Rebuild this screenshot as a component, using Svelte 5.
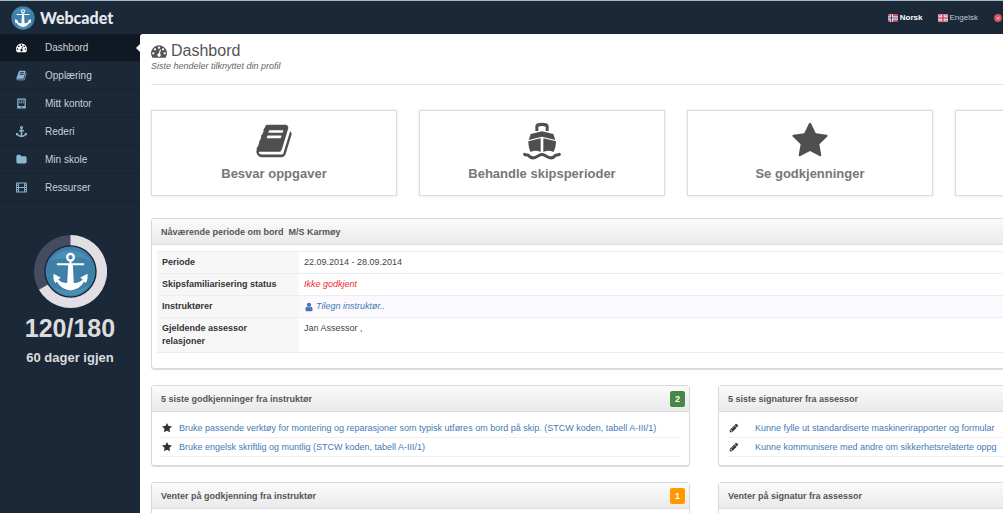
<script lang="ts">
  const icons: Record<string, string> = {
    dashboard: 'M384 1152q0-53-37.5-90.5t-90.5-37.5-90.5 37.5-37.5 90.5 37.5 90.5 90.5 37.5 90.5-37.5 37.5-90.5zm192-448q0-53-37.5-90.5t-90.5-37.5-90.5 37.5-37.5 90.5 37.5 90.5 90.5 37.5 90.5-37.5 37.5-90.5zm428 481l101-382q6-26-7.5-48.5t-38.5-29.5-48 6.5-30 39.5l-101 382q-60 5-107 43.5t-63 98.5q-20 77 20 146t117 89 146-20 89-117q16-60-6-117t-72-91zm660-33q0-53-37.5-90.5t-90.5-37.5-90.5 37.5-37.5 90.5 37.5 90.5 90.5 37.5 90.5-37.5 37.5-90.5zm-640-640q0-53-37.5-90.5t-90.5-37.5-90.5 37.5-37.5 90.5 37.5 90.5 90.5 37.5 90.5-37.5 37.5-90.5zm448 192q0-53-37.5-90.5t-90.5-37.5-90.5 37.5-37.5 90.5 37.5 90.5 90.5 37.5 90.5-37.5 37.5-90.5zm320 448q0 261-141 483-19 29-54 29h-1402q-35 0-54-29-141-221-141-483 0-182 71-348t191-286 286-191 348-71 348 71 286 191 191 286 71 348z',
    book: 'M1703 478q40 57 18 129l-275 906q-19 64-76.5 107.5t-122.5 43.5h-923q-77 0-148.5-53.5t-99.5-131.5q-24-67-2-127 0-4 3-27t4-37q1-8-3-21.5t-3-19.5q2-11 8-21t16.5-23.5 16.5-23.5q23-38 45-91.5t30-91.5q3-10 .5-30t-.5-28q3-11 17-28t17-23q21-36 42-92t25-90q1-9-2.5-32t.5-28q4-13 22-30.5t22-22.5q19-26 42.5-84.5t27.5-96.5q1-8-3-25.5t-2-26.5q2-8 9-18t18-23 17-21q8-12 16.5-30.5t15-35 16-36 19.5-32 26.5-23.5 36-11.5 47.5 5.5l-1 3q38-9 51-9h761q74 0 114 56t18 130l-274 906q-36 119-71.5 153.5t-128.5 34.5h-869q-27 0-38 15-11 16-1 43 24 70 144 70h923q29 0 56-15.5t35-41.5l300-987q7-22 5-57 38 15 59 43zm-1064 2q-4 13 2 22.5t20 9.5h608q13 0 25.5-9.5t16.5-22.5l21-64q4-13-2-22.5t-20-9.5h-608q-13 0-25.5 9.5t-16.5 22.5zm-83 256q-4 13 2 22.5t20 9.5h608q13 0 25.5-9.5t16.5-22.5l21-64q4-13-2-22.5t-20-9.5h-608q-13 0-25.5 9.5t-16.5 22.5z',
    office: 'M200 160q0-64 64-64h1264q64 0 64 64v1536h-1392zM400 300v1000h992v-1000zM500 400h200v160h-200zm300 0h200v160h-200zm300 0h200v160h-200zM500 700h200v160h-200zm300 0h200v160h-200zm300 0h200v160h-200zM700 1420v140h392v-140z',
    anchor: 'M960 256q0-26-19-45t-45-19-45 19-19 45 19 45 45 19 45-19 19-45zm832 928v352q0 22-20 30-8 2-12 2-12 0-23-9l-93-93q-119 143-318.5 226.5t-429.5 83.5-429.5-83.5-318.5-226.5l-93 93q-9 9-23 9-4 0-12-2-20-8-20-30v-352q0-14 9-23t23-9h352q22 0 30 20 8 19-7 35l-100 100q67 91 189.5 153.5t271.5 82.5v-647h-192q-26 0-45-19t-19-45v-128q0-26 19-45t45-19h192v-163q-58-34-93-92.5t-35-128.5q0-106 75-181t181-75 181 75 75 181q0 70-35 128.5t-93 92.5v163h192q26 0 45 19t19 45v128q0 26-19 45t-45 19h-192v647q149-20 271.5-82.5t189.5-153.5l-100-100q-15-16-7-35 8-20 30-20h352q14 0 23 9t9 23z',
    folder: 'M1728 608v704q0 92-66 158t-158 66h-1216q-92 0-158-66t-66-158v-960q0-92 66-158t158-66h320q92 0 158 66t66 158v32h672q92 0 158 66t66 158z',
    film: 'M0 224q0-128 128-128h1536q128 0 128 128v1344q0 128-128 128h-1536q-128 0-128-128zM140 240v200h190v-200zm0 370v200h190v-200zm0 370v200h190v-200zm0 370v200h190v-200zM1462 240v200h190v-200zm0 370v200h190v-200zm0 370v200h190v-200zm0 370v200h190v-200zM480 240v570h832v-570zm0 740v570h832v-570z',
    star: 'M1728 647q0 22-26 48l-363 354 86 500q1 7 1 20 0 21-10.5 35.5t-30.5 14.5q-19 0-40-12l-449-236-449 236q-22 12-40 12-21 0-31.5-14.5t-10.5-35.5q0-6 2-20l86-500-364-354q-25-27-25-48 0-37 56-46l502-73 225-455q19-41 49-41t49 41l225 455 502 73q56 9 56 46z',
    user: 'M1536 1399q0 109-62.5 187t-150.5 78h-854q-88 0-150.5-78t-62.5-187q0-85 8.5-160.5t31.5-152 58.5-131 94-89 134.5-34.5q131 128 313 128t313-128q76 0 134.5 34.5t94 89 58.5 131 31.5 152 8.5 160.5zm-256-887q0 159-112.5 271.5t-271.5 112.5-271.5-112.5-112.5-271.5 112.5-271.5 271.5-112.5 271.5 112.5 112.5 271.5z',
    pencil: 'M491 1536l91-91-235-235-91 91v107h128v128h107zm523-928q0-22-22-22-10 0-17 7l-542 542q-7 7-7 17 0 22 22 22 10 0 17-7l542-542q7-7 7-17zm-54-192l416 416-832 832h-416v-416zm683 96q0 53-37 90l-166 166-416-416 166-165q36-38 90-38 53 0 91 38l235 234q37 39 37 91z',
  };

  const menu = [
    { label: 'Dashbord', icon: 'dashboard', active: true },
    { label: 'Opplæring', icon: 'book' },
    { label: 'Mitt kontor', icon: 'office' },
    { label: 'Rederi', icon: 'anchor' },
    { label: 'Min skole', icon: 'folder' },
    { label: 'Ressurser', icon: 'film' },
  ];

  const tiles = [
    { label: 'Besvar oppgaver', icon: 'book' },
    { label: 'Behandle skipsperioder', icon: 'ship' },
    { label: 'Se godkjenninger', icon: 'star' },
  ];

  const panels = [
    {
      title: '5 siste godkjenninger fra instruktør',
      count: 2,
      tone: 'green',
      icon: 'star',
      items: [
        'Bruke passende verktøy for montering og reparasjoner som typisk utføres om bord på skip. (STCW koden, tabell A-III/1)',
        'Bruke engelsk skriftlig og muntlig (STCW koden, tabell A-III/1)',
      ],
    },
    {
      title: '5 siste signaturer fra assessor',
      icon: 'pencil',
      items: [
        'Kunne fylle ut standardiserte maskinerirapporter og formular',
        'Kunne kommunisere med andre om sikkerhetsrelaterte oppg',
      ],
    },
    { title: 'Venter på godkjenning fra instruktør', count: 1, tone: 'orange', icon: 'star', items: [] },
    { title: 'Venter på signatur fra assessor', icon: 'pencil', items: [] },
  ];
</script>

{#snippet icon(name: string)}
  <svg class="icon" viewBox="0 0 1792 1792" aria-hidden="true">
    <path fill-rule="evenodd" d={icons[name]} />
  </svg>
{/snippet}

{#snippet emblem()}
  <circle cx="210" cy="185" r="75" fill="#3f80a8" />
  <path d="M150 150q25-30 60-28t62 30q-30-14-60-10t-62 8zM160 232q30 14 55 12t50-20q-18 32-54 33t-51-25z" fill="#5c9cc0" opacity=".5" />
  <circle cx="210" cy="142" r="10" fill="none" stroke="#fff" stroke-width="7" />
  <path d="M207 150h6v10h38v6h-34l3 54q20-2 27-12l-8-4 22-12q2 20-5 28l-5-4q-14 24-41 26-27-2-41-26l-5 4q-7-8-5-28l22 12-8 4q7 10 27 12l3-54h-34v-6h38z" fill="#fff" />
{/snippet}

<div class="page">
  <header>
    <a class="brand" href="#home">
      <svg class="brand-mark" viewBox="133 108 154 154" aria-hidden="true">{@render emblem()}</svg>
      <span>Webcadet</span>
    </a>
    <nav class="languages">
      <a class="current" href="#no">
        <svg viewBox="0 0 18 14" aria-hidden="true">
          <rect width="18" height="14" fill="#e04a5e" />
          <path d="M6 0v14M0 7h18" stroke="#fff" stroke-width="5" />
          <path d="M6 0v14M0 7h18" stroke="#35477e" stroke-width="2" />
        </svg>
        Norsk
      </a>
      <a href="#en">
        <svg viewBox="0 0 18 14" aria-hidden="true">
          <rect width="18" height="14" fill="#5a68a0" />
          <path d="M0 0l18 14M18 0L0 14" stroke="#fff" stroke-width="4" />
          <path d="M0 0l18 14M18 0L0 14" stroke="#d84a5e" stroke-width="2" />
          <path d="M9 0v14M0 7h18" stroke="#fff" stroke-width="5" />
          <path d="M9 0v14M0 7h18" stroke="#d84a5e" stroke-width="3" />
        </svg>
        Engelsk
      </a>
      <a href="#more">
        <svg viewBox="0 0 18 14" aria-hidden="true">
          <circle cx="9" cy="7" r="7" fill="#d9505a" />
          <path d="M5 4l4 2 4-3-2 4 2 3-4-1-3 2 1-4z" fill="#f0a5a8" />
        </svg>
      </a>
    </nav>
  </header>

  <div class="body">
    <aside>
      <ul class="menu">
        {#each menu as item}
          <li class:active={item.active}>
            <a href="#menu">{@render icon(item.icon)}{item.label}</a>
          </li>
        {/each}
      </ul>
      <div class="progress">
        <svg viewBox="100 75 220 220" aria-hidden="true">
          <circle cx="210" cy="185" r="110" fill="#454c60" />
          <path d="M210 185V75A110 110 0 1 1 115 240z" fill="#e1dfe4" />
          <circle cx="210" cy="185" r="79" fill="#162638" />
          {@render emblem()}
        </svg>
        <strong>120/180</strong>
        <span>60 dager igjen</span>
      </div>
    </aside>

    <main>
      <div class="heading">
        <h1>{@render icon('dashboard')}Dashbord</h1>
        <p>Siste hendeler tilknyttet din profil</p>
      </div>

      <div class="tiles">
        {#each tiles as tile}
          <a class="tile" href="#tile">
            {#if tile.icon === 'ship'}
              <svg class="icon" viewBox="338 68 114 114" aria-hidden="true">
                <path d="M375 95V80q0-10 20-10t20 10v15h-9V82q-11-4-22 0v13zM361 104l34-8 34 8 6 18-40-10-40 10zM354 126l37-9v41q-16-8-30 0-7-12-7-32zM399 117l38 9q0 20-8 32-14-8-30 0z" />
                <path d="M343 165q6 3 10 2 9 11 20 8 8-3 14-7 8-5 16 0 6 4 14 7 11 3 20-8 4 1 10-2" fill="none" stroke="currentColor" stroke-width="9" stroke-linecap="round" stroke-linejoin="round" />
              </svg>
            {:else}
              {@render icon(tile.icon)}
            {/if}
            {tile.label}
          </a>
        {/each}
        <div class="tile"></div>
      </div>

      <section class="panel period">
        <h2>Nåværende periode om bord&nbsp; M/S Karmøy</h2>
        <table>
          <tbody>
            <tr><th scope="row">Periode</th><td>22.09.2014 - 28.09.2014</td></tr>
            <tr><th scope="row">Skipsfamiliarisering status</th><td><em>Ikke godkjent</em></td></tr>
            <tr class="highlight">
              <th scope="row">Instruktører</th>
              <td><a href="#assign">{@render icon('user')}<i>Tilegn instruktør..</i></a></td>
            </tr>
            <tr><th scope="row">Gjeldende assessor relasjoner</th><td>Jan Assessor ,</td></tr>
          </tbody>
        </table>
      </section>

      <div class="panels">
        {#each panels as panel}
          <section class="panel">
            <h2>
              {panel.title}
              {#if panel.count}<span class="badge {panel.tone}">{panel.count}</span>{/if}
            </h2>
            <ul class="list {panel.icon}">
              {#each panel.items as item}
                <li>{@render icon(panel.icon)}<a href="#item">{item}</a></li>
              {/each}
            </ul>
          </section>
        {/each}
      </div>
    </main>
  </div>
</div>

<style>
  :global(body) {
    background: #1a2838;
  }

  .page {
    height: 100vh;
    display: flex;
    flex-direction: column;
    overflow: hidden;
    font-family: 'Liberation Sans', Arial, sans-serif;
    font-size: 9px;
    color: #444;
  }

  a {
    color: #4679b4;
    text-decoration: none;
  }

  ul {
    list-style: none;
    margin: 0;
    padding: 0;
  }

  .icon {
    width: 1em;
    height: 1em;
    flex: none;
    fill: currentColor;
  }

  header {
    display: flex;
    align-items: center;
    justify-content: space-between;
    flex: none;
    height: 33px;
    padding-left: 11px;
    border-top: 1px solid #a9bac7;
    background: #1a2838;
  }

  .brand {
    display: flex;
    align-items: center;
    gap: 5px;
    color: #e6eaee;
    font: 900 16px/20px Lato, sans-serif;
  }

  .brand-mark {
    width: 24px;
    height: 24px;
  }

  .languages {
    display: flex;
    gap: 15px;
  }

  .languages a {
    display: flex;
    align-items: center;
    gap: 2px;
    color: #c3c9d0;
    font-size: 8px;
  }

  .languages .current {
    color: #fff;
    font-weight: bold;
  }

  .languages svg {
    width: 10px;
    height: 8px;
  }

  .body {
    display: flex;
    flex: 1;
    min-height: 0;
  }

  aside {
    flex: none;
    width: 140px;
    background: #1a2838;
  }

  .menu li {
    position: relative;
    border-bottom: 1px solid #16222f;
  }

  .menu a {
    display: flex;
    align-items: center;
    gap: 18px;
    height: 27px;
    padding-left: 16px;
    color: #c9d2da;
    font-size: 10px;
  }

  .menu .icon {
    width: 11px;
    height: 11px;
    color: #8fb6d0;
  }

  .menu .active {
    background: #0f1823;
  }

  .menu .active .icon {
    color: #fff;
  }

  .menu .active::after {
    content: '';
    position: absolute;
    right: 0;
    top: 10px;
    border: 4px solid transparent;
    border-left-width: 0;
    border-right-color: #fff;
  }

  .progress {
    display: flex;
    flex-direction: column;
    align-items: center;
    padding-top: 33px;
    color: #dcdcdc;
    font-weight: bold;
  }

  .progress svg {
    width: 73px;
    height: 73px;
  }

  .progress strong {
    margin-top: 5px;
    font-size: 25px;
    line-height: 30px;
  }

  .progress span {
    margin-top: 7px;
    font-size: 13px;
    line-height: 16px;
  }

  main {
    flex: 1 0 auto;
    min-width: 1106px;
    padding: 0 11px;
    background: #fff;
    border-top-left-radius: 3px;
  }

  .heading {
    padding: 8px 0 12px;
    border-bottom: 1px solid #e6e6e6;
  }

  h1 {
    display: flex;
    align-items: center;
    gap: 4px;
    margin: 0;
    color: #555;
    font-size: 16px;
    font-weight: normal;
    line-height: 18px;
  }

  .heading p {
    margin: 0;
    color: #666;
    font-style: italic;
    line-height: 12px;
  }

  .tiles {
    display: grid;
    grid-template-columns: repeat(4, 1fr);
    gap: 22px;
    margin: 25px 56px 22px 0;
  }

  .tile {
    display: flex;
    flex-direction: column;
    align-items: center;
    gap: 4px;
    min-height: 62px;
    padding: 11px 0;
    border: 1px solid #ddd;
    box-shadow: 0 0 2px #ddd;
    color: #777;
    font-size: 13px;
    font-weight: bold;
    line-height: 20px;
  }

  .tile .icon {
    width: 38px;
    height: 38px;
    color: #4d504f;
  }

  .panel {
    border: 1px solid #d8d8d8;
    border-radius: 3px;
    box-shadow: 0 1px 1px #ddd;
  }

  h2 {
    display: flex;
    align-items: center;
    justify-content: space-between;
    height: 25px;
    margin: 0;
    padding: 0 4px 0 9px;
    border-bottom: 1px solid #ddd;
    background: linear-gradient(#fbfbfb, #ebe9eb);
    color: #555;
    font-size: 9px;
  }

  .period {
    margin-bottom: 16px;
    padding-bottom: 15px;
  }

  table {
    width: calc(100% - 10px);
    margin: 6px 5px 0;
    border-collapse: collapse;
    line-height: 13px;
  }

  th,
  td {
    padding: 4px 5px;
    border-top: 1px solid #eee;
    border-bottom: 1px solid #eee;
    text-align: left;
    vertical-align: top;
  }

  th {
    box-sizing: border-box;
    width: 142px;
    padding-right: 16px;
    background: #f7f7f7;
    color: #333;
  }

  .highlight td {
    background: #fbf9fd;
  }

  td em {
    color: #f02a35;
  }

  td a {
    display: flex;
    align-items: center;
    gap: 2px;
  }

  td .icon {
    width: 10px;
    height: 10px;
  }

  .panels {
    display: grid;
    grid-template-columns: repeat(2, 1fr);
    gap: 16px 28px;
  }

  .badge {
    width: 15px;
    border-radius: 2px;
    color: #fff;
    line-height: 16px;
    text-align: center;
  }

  .green {
    background: #468847;
  }

  .orange {
    background: #ff9900;
  }

  .list {
    padding: 7px 8px 8px;
  }

  .list li {
    display: flex;
    align-items: center;
    gap: 7px;
    height: 18px;
    padding-left: 2px;
    border-bottom: 1px solid #f0f0f0;
    white-space: nowrap;
  }

  .list .icon {
    width: 10px;
    height: 10px;
    color: #333;
  }

  .list.pencil li {
    gap: 16px;
  }
</style>
